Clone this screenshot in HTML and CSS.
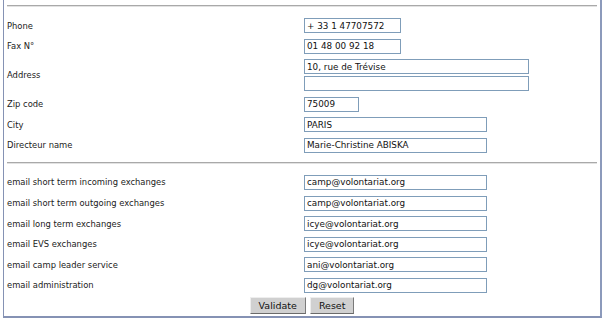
FILE: index.html
```html
<!DOCTYPE html>
<html>
  <head>
    <title>Organisation details</title>
    <link rel="stylesheet" href="styles.css">
  </head>
  <body>
    <form class="panel">
      <hr class="sep sep-top">

      <div class="fields">
        <label class="label">Phone</label>
        <div><input class="w-short" type="text" value="+ 33 1 47707572"></div>

        <label class="label">Fax N°</label>
        <div><input class="w-short" type="text" value="01 48 00 92 18"></div>

        <label class="label">Address</label>
        <div class="stack">
          <input class="w-long" type="text" value="10, rue de Trévise">
          <input class="w-long" type="text" value="">
        </div>

        <label class="label">Zip code</label>
        <div><input class="w-zip" type="text" value="75009"></div>

        <label class="label">City</label>
        <div><input class="w-mid" type="text" value="PARIS"></div>

        <label class="label">Directeur name</label>
        <div><input class="w-mid" type="text" value="Marie-Christine ABISKA"></div>
      </div>

      <hr class="sep sep-mid">

      <div class="fields">
        <label class="label">email short term incoming exchanges</label>
        <div><input class="w-mid" type="text" value="camp@volontariat.org"></div>

        <label class="label">email short term outgoing exchanges</label>
        <div><input class="w-mid" type="text" value="camp@volontariat.org"></div>

        <label class="label">email long term exchanges</label>
        <div><input class="w-mid" type="text" value="icye@volontariat.org"></div>

        <label class="label">email EVS exchanges</label>
        <div><input class="w-mid" type="text" value="icye@volontariat.org"></div>

        <label class="label">email camp leader service</label>
        <div><input class="w-mid" type="text" value="ani@volontariat.org"></div>

        <label class="label">email administration</label>
        <div><input class="w-mid" type="text" value="dg@volontariat.org"></div>
      </div>

      <div class="actions">
        <button type="button" class="btn">Validate</button>
        <button type="reset" class="btn">Reset</button>
      </div>
    </form>
  </body>
</html>
```

FILE: styles.css
```css
body {
    margin: 0;
    background: #ffffff;
    font-family: "DejaVu Sans", Verdana, sans-serif;
    color: #1a1a1a;
  }
  .panel {
    box-sizing: border-box;
    margin-left: 3px;
    width: 599px;
    height: 318px;
    padding: 5px 3px 0 3px;
    border-left: 1px solid #8592b4;
    border-right: 2px solid #8c9abb;
    border-bottom: 2px solid #8592b4;
  }
  .sep {
    margin: 0;
    height: 0;
    border: none;
    border-top: 1px solid #a9a9a9;
    border-bottom: 1px solid #e2e2e2;
  }
  .sep-mid {
    margin-top: 9px;
    margin-bottom: 11px;
  }
  .sep-top + .fields {
    margin-top: 11px;
  }
  .fields {
    display: grid;
    grid-template-columns: 297px auto;
    row-gap: 5.6px;
    align-items: center;
  }
  .label {
    font-size: 8.4px;
  }
  .stack {
    display: flex;
    flex-direction: column;
    gap: 2px;
  }
  input {
    display: block;
    box-sizing: border-box;
    height: 15px;
    margin: 0;
    padding: 0 2px;
    border: 1px solid #7f9db9;
    background: #ffffff;
    font-family: "DejaVu Sans", Verdana, sans-serif;
    font-size: 8.8px;
    color: #111;
  }
  .w-short { width: 97px; }
  .w-long { width: 225px; }
  .w-zip { width: 55px; }
  .w-mid { width: 183px; }
  .actions {
    display: flex;
    justify-content: center;
    gap: 4px;
    margin-top: 4px;
  }
  .btn {
    box-sizing: border-box;
    height: 17px;
    padding: 0 8px;
    border: 1px solid;
    border-color: #eeeeee #7a7a7a #6a6a6a #eeeeee;
    background: #d0d0d0;
    font-family: "DejaVu Sans", Verdana, sans-serif;
    font-size: 9.5px;
    color: #111;
  }
```
